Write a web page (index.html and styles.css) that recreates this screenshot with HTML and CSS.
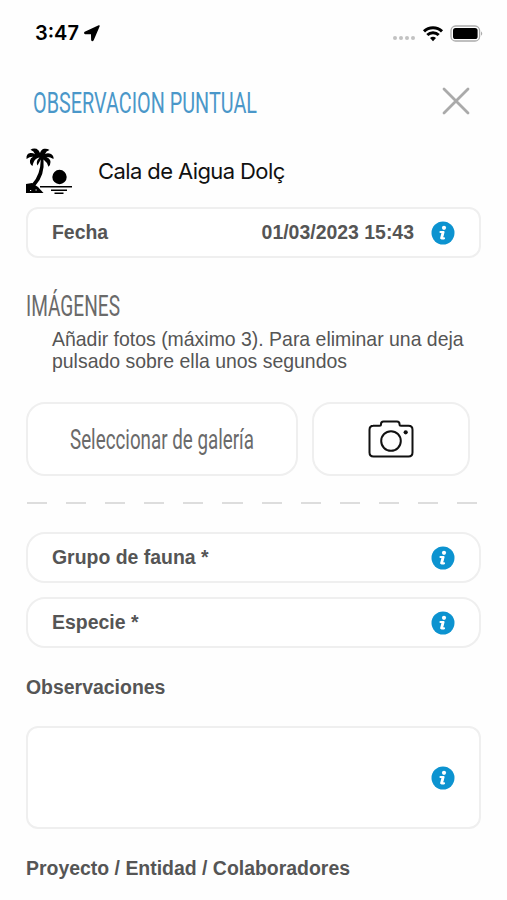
FILE: index.html
```
<!DOCTYPE html>
<html lang="es">
<head>
    <meta charset="UTF-8">
    <meta name="viewport" content="width=device-width, initial-scale=1.0">
    <title>Observacion puntual</title>
    <link rel="stylesheet" href="styles.css">
</head>
<body>
    <!-- info icon shared by the fields -->
    <svg class="symbols" width="0" height="0">
        <symbol id="info" viewBox="0 0 24 24">
            <circle cx="12" cy="12" r="11.5" fill="#0c93d0"/>
            <circle cx="13" cy="6.800" r="2.100" fill="#fff"/>
            <path d="M9.500 11h3l-1.700 6.300h2.200" fill="none" stroke="#fff" stroke-width="2.200" stroke-linejoin="round" stroke-linecap="round"/>
            <path d="M11.800 11.500l-1.400 5.500" stroke="#fff" stroke-width="2.400" stroke-linecap="round"/>
        </symbol>
    </svg>

    <div class="status-bar">
        <span class="time">3:47</span>
        <svg class="location" width="16" height="16" viewBox="0 0 16 16">
            <path d="M15 1L1 7.400q-.6.800.3 1l6.400.2.200 6.400q.4.900 1 .1z" fill="#000" stroke="#000" stroke-width="1.500" stroke-linejoin="round"/>
        </svg>
        <div class="status-icons">
            <div class="signal"><i></i><i></i><i></i><i></i></div>
            <svg width="22" height="17" viewBox="0 0 22 17">
                <path d="M2 6.300a13 13 0 0 1 18 0M5.300 10a8.200 8.200 0 0 1 11.400 0" fill="none" stroke="#000" stroke-width="3"/>
                <path d="M11 16.200l-3-3.100a4.400 4.400 0 0 1 6 0z" fill="#000"/>
            </svg>
            <svg width="34" height="17" viewBox="0 0 34 17">
                <rect x="1" y="1" width="28.600" height="15" rx="4.600" fill="none" stroke="#aaa" stroke-width="1.300"/>
                <rect x="3" y="3" width="24.600" height="11" rx="2.600" fill="#000"/>
                <path d="M31.200 6.200q2 2.300 0 4.600z" fill="#999"/>
            </svg>
        </div>
    </div>

    <header>
        <svg class="title" width="230" height="44">
            <text x="0" y="32" textLength="224" lengthAdjust="spacingAndGlyphs">OBSERVACION PUNTUAL</text>
        </svg>
        <svg class="close" width="28" height="28" viewBox="0 0 28 28">
            <path d="M2 2l24 24M26 2L2 26" stroke="#aaa" stroke-width="2.800" stroke-linecap="round"/>
        </svg>
    </header>

    <div class="place">
        <svg width="46" height="46" viewBox="0 0 46 46">
            <path d="M13.500 9.500C10.500 10 8 11.500 6.500 18q-3-2-2.500-5.500Q4.500 10 7 8.800Q4 8.500.5 11Q0 5.500 4.500 5Q7 4.800 9 6.200Q8 3 4.500 1.800Q7-.2 10.500.8Q13 2 14 5Q15 1.500 18 .8Q21 .2 23.500 2Q20 3 19 6Q22 4.500 25 6Q28 8 27.500 11Q23.500 8.500 20.500 9Q24.500 11 24.500 14Q24.500 17 22.500 18.800Q21.500 14.500 17.500 11.500Q19 27 9.500 37.500L6 36Q14.500 27 14.800 11.500L11.500 17.500Q9.500 13.500 13.500 9.500z" fill="#000"/>
            <path d="M0 36l6-1 3 2 3 2 5.500 6H0z" fill="#000"/>
            <path d="M4 42.500h1.200M9.500 42h1.200" stroke="#fff" stroke-width="1.200"/>
            <circle cx="33.500" cy="29" r="7.200" fill="#000"/>
            <path d="M14 38.800h32M25 42.300h16M28.500 45.300h9" stroke="#000" stroke-width="1.500"/>
        </svg>
        <span>Cala de Aigua Dolç</span>
    </div>

    <div class="field date">
        <span>Fecha</span>
        <span class="value">01/03/2023 15:43</span>
        <svg class="info"><use href="#info"/></svg>
    </div>

    <section class="images">
        <svg class="subtitle" width="100" height="44">
            <text x="0" y="34" textLength="94" lengthAdjust="spacingAndGlyphs">IMÁGENES</text>
        </svg>
        <p>Añadir fotos (máximo 3). Para eliminar una deja<br>pulsado sobre ella unos segundos</p>
        <div class="buttons">
            <button class="gallery">
                <svg width="186" height="46">
                    <text x="1" y="33" textLength="184" lengthAdjust="spacingAndGlyphs">Seleccionar de galería</text>
                </svg>
            </button>
            <button class="camera">
                <svg width="46" height="38" viewBox="0 0 46 38">
                    <path d="M5 5.800h6.500q1.500 0 1.500-1.500V4q0-2.500 2.500-2.500h13.500q2.500 0 2.500 2.500v.3q0 1.500 1.500 1.500H40.500q4 0 4 4V32.500q0 4-4 4H5.500q-4 0-4-4V9.800q0-4 4-4z" fill="none" stroke="#111" stroke-width="2"/>
                    <circle cx="23" cy="21" r="9.800" fill="none" stroke="#111" stroke-width="2"/>
                    <circle cx="37.700" cy="12.300" r="2.100" fill="#111"/>
                </svg>
            </button>
        </div>
    </section>

    <div class="separator"></div>

    <div class="field">
        <span>Grupo de fauna *</span>
        <svg class="info"><use href="#info"/></svg>
    </div>
    <div class="field">
        <span>Especie *</span>
        <svg class="info"><use href="#info"/></svg>
    </div>

    <label>Observaciones</label>
    <div class="field notes">
        <svg class="info"><use href="#info"/></svg>
    </div>

    <label>Proyecto / Entidad / Colaboradores</label>
</body>
</html>
```
FILE: styles.css
```
* {
    box-sizing: border-box;
}

body {
    margin: 0;
    padding: 0 26px;
    height: 900px;
    overflow: hidden;
    background: #fefefe;
    color: #555;
    font-family: "Liberation Sans", Arial, sans-serif;
    font-size: 19.45px;
}

svg {
    display: block;
    flex-shrink: 0;
    overflow: visible;
}

.symbols {
    position: absolute;
}

.status-bar {
    display: flex;
    align-items: center;
    height: 66px;
    padding-left: 9px;
    color: #000;
}

.time {
    font-family: Inter, sans-serif;
    font-size: 20px;
    font-weight: 600;
}

.location {
    margin-left: 5px;
}

.status-icons {
    display: flex;
    align-items: center;
    margin: 0 -3px 0 auto;
}

.signal {
    display: flex;
    gap: 2px;
    margin: 10px 7px 0 0;
}

.signal i {
    width: 4px;
    height: 4px;
    border-radius: 50%;
    background: #c2c2c2;
}

.status-icons svg + svg {
    margin-left: 6px;
}

header {
    display: flex;
    justify-content: space-between;
    align-items: center;
    height: 69px;
    padding: 0 11px 0 7px;
}

.title,
.subtitle,
.gallery svg {
    font-family: Roboto, sans-serif;
    font-weight: 400;
}

.title {
    font-size: 30px;
    fill: #4a97c9;
    margin-top: 5px;
}

.place {
    display: flex;
    align-items: center;
    gap: 26px;
    height: 72px;
    color: #111;
    font-family: Inter, sans-serif;
    font-size: 22px;
    letter-spacing: -0.6px;
}

.field {
    display: flex;
    align-items: center;
    height: 51px;
    margin-bottom: 14px;
    padding: 0 24px;
    border: 2px solid #efefef;
    border-radius: 19px;
    background: #fff;
    font-weight: bold;
}

.field.date {
    border-radius: 12px;
    margin-bottom: 0;
}

.info {
    width: 24px;
    height: 24px;
    margin-left: auto;
}

.value {
    margin-left: auto;
}

.value + .info {
    margin-left: 17px;
}

.images {
    padding-top: 24px;
}

.subtitle {
    font-size: 29px;
    fill: #6a6a6a;
}

.images p {
    margin: 2px 0 30px 26px;
    line-height: 22px;
    white-space: nowrap;
}

.buttons {
    display: flex;
    gap: 14px;
}

button {
    display: flex;
    align-items: center;
    justify-content: center;
    height: 74px;
    padding: 0;
    border: 2px solid #efefef;
    border-radius: 19px;
    background: #fff;
}

.gallery {
    width: 272px;
}

.gallery svg {
    font-size: 28px;
    fill: #6a6a6a;
}

.camera {
    width: 158px;
}

.separator {
    width: 450px;
    height: 2px;
    margin: 26px 0 28px 1px;
    background: repeating-linear-gradient(90deg, #ddd 0 20px, transparent 20px 39.1px);
}

label {
    display: block;
    margin-top: 28px;
    line-height: 22px;
    font-weight: bold;
}

.field.notes {
    height: 103px;
    margin: 28px 0;
    border-radius: 12px;
}
```
